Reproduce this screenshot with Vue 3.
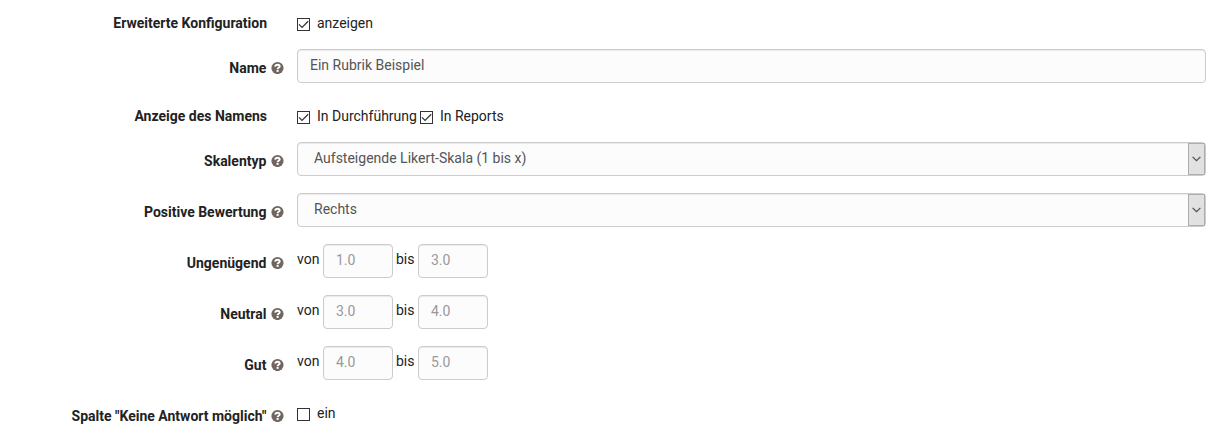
<script setup>
import { ref } from 'vue'

const rows = ref([
  { label: 'Erweiterte Konfiguration', kind: 'checks', size: 'first', checks: [{ text: 'anzeigen', on: true }] },
  { label: 'Name', help: true, kind: 'text', value: 'Ein Rubrik Beispiel' },
  { label: 'Anzeige des Namens', kind: 'checks', size: 'short', checks: [{ text: 'In Durchführung', on: true }, { text: 'In Reports', on: true }] },
  { label: 'Skalentyp', help: true, kind: 'select', value: 'Aufsteigende Likert-Skala (1 bis x)' },
  { label: 'Positive Bewertung', help: true, kind: 'select', value: 'Rechts' },
  { label: 'Ungenügend', help: true, kind: 'range', from: '1.0', to: '3.0' },
  { label: 'Neutral', help: true, kind: 'range', from: '3.0', to: '4.0' },
  { label: 'Gut', help: true, kind: 'range', from: '4.0', to: '5.0' },
  { label: 'Spalte "Keine Antwort möglich"', help: true, kind: 'checks', size: 'last', checks: [{ text: 'ein', on: false }] },
])
</script>

<template>
  <form class="form" @submit.prevent>
    <div v-for="row in rows" :key="row.label" class="row" :class="row.size">
      <div class="label">
        <span class="label-text">{{ row.label }}</span>
        <span class="help" :class="{ shown: row.help }">
          <svg v-if="row.help" width="13" height="13" viewBox="0 0 13 13">
            <circle cx="6.5" cy="7" r="6.1" fill="#70655f" />
            <path d="M4.2 5.7C4.4 4.4 5.3 3.8 6.5 3.8C7.8 3.8 8.7 4.5 8.7 5.5C8.7 6.8 6.6 6.8 6.6 8.2" fill="none" stroke="#fff" stroke-width="1.9" />
            <rect x="5.6" y="9" width="2" height="1.9" fill="#fff" />
          </svg>
        </span>
      </div>

      <div v-if="row.kind === 'checks'" class="checks">
        <label v-for="c in row.checks" :key="c.text" class="check">
          <span class="box" @click="c.on = !c.on">
            <svg v-if="c.on" width="11" height="11" viewBox="0 0 11 11">
              <path d="M1 5.4L4 8.4L10.2 2.2" fill="none" stroke="#333" stroke-width="1.25" />
            </svg>
          </span>
          <span class="check-text">{{ c.text }}</span>
        </label>
      </div>

      <input v-else-if="row.kind === 'text'" v-model="row.value" class="field" type="text" />

      <div v-else-if="row.kind === 'select'" class="field select">
        <span class="select-value">{{ row.value }}</span>
        <span class="arrow">
          <svg width="9" height="6" viewBox="0 0 9 6">
            <path d="M0.6 0.9L4.5 4.6L8.4 0.9" fill="none" stroke="#505050" stroke-width="1.3" />
          </svg>
        </span>
      </div>

      <div v-else class="range">
        <span class="word von">von</span>
        <input class="field small" type="text" :placeholder="row.from" />
        <span class="word bis">bis</span>
        <input class="field small" type="text" :placeholder="row.to" />
      </div>
    </div>
  </form>
</template>

<style>
body {
  background: #fff;
}
</style>

<style scoped>
.form {
  width: 1210px;
  height: 446px;
  box-sizing: border-box;
  overflow: hidden;
  font: 14px/20px Roboto, "Liberation Sans", sans-serif;
  color: #222;
}
.row {
  display: grid;
  grid-template-columns: 284px 909px;
  column-gap: 13px;
  height: 51px;
  align-items: start;
}
.row.first {
  height: 49px;
}
.row.short {
  height: 42px;
}
.label {
  display: flex;
  justify-content: flex-end;
  padding-top: 9px;
  font-weight: 700;
  white-space: nowrap;
}
.first .label {
  padding-top: 13px;
}
.short .label {
  padding-top: 6px;
}
.help {
  width: 13px;
  height: 13px;
  margin: 3px 0 0 4px;
}
.help.shown {
  margin-left: 4.6px;
}
.help svg,
.box svg,
.arrow svg {
  display: block;
}
.checks {
  display: flex;
  gap: 3px;
  padding-top: 6px;
}
.first .checks {
  padding-top: 13px;
}
.check {
  display: flex;
}
.box {
  width: 13px;
  height: 13px;
  box-sizing: border-box;
  margin: 5px 7px 0 0;
  border: 1px solid #333;
  background: #fff;
}
.field {
  width: 100%;
  height: 34px;
  box-sizing: border-box;
  margin: 0;
  padding: 5px 12px 7px;
  border: 1px solid #ccc;
  border-radius: 4px;
  background: #fcfcfc;
  box-shadow: inset 0 1px 1px rgba(0, 0, 0, 0.075);
  color: #555;
  font: inherit;
  outline: none;
}
.select {
  display: flex;
  justify-content: space-between;
  padding: 0;
}
.select-value {
  padding: 5px 16px;
}
.arrow {
  display: flex;
  align-items: center;
  justify-content: center;
  width: 17px;
  height: 32px;
  box-sizing: border-box;
  border: 1px solid #adadad;
  background: #e1e1e1;
}
.range {
  display: flex;
}
.word {
  padding-top: 5px;
}
.von {
  width: 26px;
}
.bis {
  width: 22px;
  margin-left: 3px;
}
.small {
  width: 70px;
}
.small::placeholder {
  color: #999;
  opacity: 1;
}
</style>
